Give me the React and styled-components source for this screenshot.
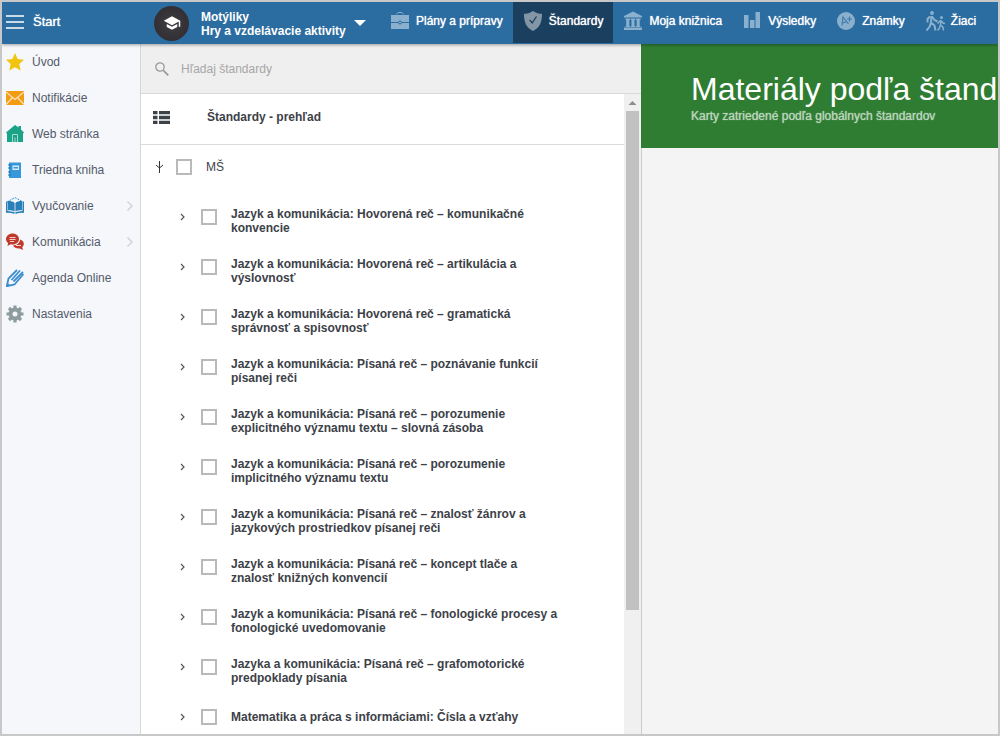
import React from 'react'
import { useState } from "react";
import styled, { createGlobalStyle } from "styled-components";

const menu = [
    { name: "Úvod", icon: "star" },
    { name: "Notifikácie", icon: "mail" },
    { name: "Web stránka", icon: "house" },
    { name: "Triedna kniha", icon: "notebook" },
    { name: "Vyučovanie", icon: "book", more: true },
    { name: "Komunikácia", icon: "chat", more: true },
    { name: "Agenda Online", icon: "pencil" },
    { name: "Nastavenia", icon: "gear" },
];

const tabs = [
    { name: "Plány a prípravy", icon: "briefcase" },
    { name: "Štandardy", icon: "shield" },
    { name: "Moja knižnica", icon: "library" },
    { name: "Výsledky", icon: "bars" },
    { name: "Známky", icon: "grade" },
    { name: "Žiaci", icon: "pupils" },
];

const standards = [
    "Jazyk a komunikácia: Hovorená reč – komunikačné konvencie",
    "Jazyk a komunikácia: Hovorená reč – artikulácia a výslovnosť",
    "Jazyk a komunikácia: Hovorená reč – gramatická správnosť a spisovnosť",
    "Jazyk a komunikácia: Písaná reč – poznávanie funkcií písanej reči",
    "Jazyk a komunikácia: Písaná reč – porozumenie explicitného významu textu – slovná zásoba",
    "Jazyk a komunikácia: Písaná reč – porozumenie implicitného významu textu",
    "Jazyk a komunikácia: Písaná reč – znalosť žánrov a jazykových prostriedkov písanej reči",
    "Jazyk a komunikácia: Písaná reč – koncept tlače a znalosť knižných konvencií",
    "Jazyk a komunikácia: Písaná reč – fonologické procesy a fonologické uvedomovanie",
    "Jazyka a komunikácia: Písaná reč – grafomotorické predpoklady písania",
    "Matematika a práca s informáciami: Čísla a vzťahy",
];

const menuIcons = {
    star: <path fill="#f1c40f" d="M9 0l2.700 6 6.300.7-4.700 4.300 1.400 6.600L9 14.200l-5.700 3.400 1.400-6.600L0 6.700 6.300 6z" />,
    mail: (
        <>
            <path fill="#f39c12" d="M0 2h18v14H0z" />
            <path fill="none" stroke="#fbe3bd" strokeWidth="1.200" d="M0 3l9 7.500L18 3M0 15.500l6.500-7M18 15.500l-6.500-7" />
        </>
    ),
    house: (
        <>
            <path fill="#1aa386" d="M9 0l3.500 2.600V1H15v3.600L18 7.500 17 8.700V17H1V8.700L0 7.500z" />
            <path fill="none" stroke="#a5dccf" d="M6.500 17V9.500h5V17M9 17v-4.500" />
        </>
    ),
    notebook: (
        <>
            <path fill="#3498db" d="M3 1.500h12v15.500H3z" />
            <path fill="#2472a8" d="M2 3.500h3v1H2zM2 6.500h3v1H2zM2 10.500h3v1H2zM2 13.500h3v1H2z" />
            <path fill="#d8ecfa" d="M6.500 4.500H13v4.500H6.500z" />
            <path fill="#3498db" d="M7.500 6h4.500v1.500H7.500z" />
        </>
    ),
    book: (
        <>
            <path fill="none" stroke="#3498db" strokeDasharray="2 1" d="M1 5l8-4.500L17 5" />
            <path fill="#2980b9" d="M0 4.500h1.500V14l7 1v2l-3-1-5.500-.2zM18 4.500h-1.500V14l-7 1v2l3-1 5.500-.2zM2 4c3 0 5.500.6 6.600 2v8.500C7 13.300 5 13.200 2 13.200zM16 4c-3 0-5.500.6-6.600 2v8.500c1.600-1.200 3.600-1.300 6.600-1.300z" />
        </>
    ),
    chat: (
        <>
            <path fill="#c0392b" d="M6.500.5C10.500.5 13 3 13 6s-2.500 5.500-6.500 5.500c-.6 0-1.200-.1-1.800-.2L1.500 13l.6-3C.8 9 0 7.600 0 6 0 3 2.800.5 6.500.5z" />
            <path fill="#c0392b" d="M14 6.500c2.300.6 3.800 2.200 3.800 4.200 0 1.500-.7 2.700-1.600 3.500l.9 2.800-3.400-1.500c-3 .3-5.700-.8-6.700-3C11 12.200 14 10 14 6.500z" />
            <path stroke="#f3d3cf" d="M3.500 4.500h6M3.500 6.500h6M4 8.500h4M10 12.500h5" />
        </>
    ),
    pencil: (
        <>
            <path fill="none" stroke="#3b8fd0" strokeWidth="1.800" d="M11 1L2.500 9.500.8 17.200 8.500 15.500 17.500 5" />
            <path stroke="#3b8fd0" strokeWidth="1.800" d="M14 1.500L5.500 11M17 3L7.500 12.500" />
            <path fill="#3b8fd0" d="M0 18l1.300-4.500 3.200 3.200z" />
        </>
    ),
    gear: (
        <>
            <circle cx="9" cy="9" r="4.500" fill="none" stroke="#8d9c9e" strokeWidth="4" />
            <path stroke="#8d9c9e" strokeWidth="3.200" d="M9 .5v3M9 14.500v3M.5 9h3M14.500 9h3M3 3l2 2M13 13l2 2M3 15l2-2M13 5l2-2" />
        </>
    ),
};

const tabIcons = {
    briefcase: (
        <>
            <path fill="none" stroke="currentColor" d="M7 3.500V2.500L8 1.500h4l1 1v1" />
            <path fill="currentColor" d="M1 4h18v14H1z" />
            <path stroke="#2b6da1" d="M1 11.500h18" />
            <circle cx="10" cy="11.500" r="1.500" fill="#8bb0cd" stroke="#2b6da1" />
        </>
    ),
    shield: (
        <>
            <path fill="currentColor" d="M10 0c3 2 6 2.800 9 2.800 0 8-2 14-9 17.200C3 16.800 1 10.800 1 2.800 4 2.800 7 2 10 0z" />
            <path fill="none" stroke="#1b405f" strokeWidth="1.300" d="M6.700 9l2.500 3 4.300-6.500" />
        </>
    ),
    library: <path fill="currentColor" d="M10 .5l9 4.500v1.500H1V5zM2.500 7.500h4.500v1.500H6.300v6H7V16H2.500v-1h.7V9h-.7zM7.800 7.500h4.500v1.500h-.8v6h.8V16H7.800v-1h.7V9h-.7zM13 7.500h4.500v1.500h-.8v6h.8V16H13v-1h.7V9H13zM1 16.500h18V19H1z" />,
    bars: <path fill="currentColor" d="M2 4h4.500v13H2zM8 9h4.500v8H8zM13.500 1H18v16h-4.500z" />,
    grade: (
        <>
            <circle cx="10" cy="10" r="9" fill="currentColor" />
            <path fill="none" stroke="#3f7baa" strokeWidth="1.200" d="M6 14.500L7 6l5.500 7M6.500 12l4.500-1.500M11 8h5M13.500 5.500v5" />
        </>
    ),
    pupils: (
        <>
            <circle cx="7" cy="2" r="1.900" fill="currentColor" />
            <path fill="none" stroke="currentColor" strokeWidth="2" d="M6.500 5L6 11.500l3.500 3 1 5M6 11.500L4.700 15.500 1.500 19.500M7 5.500l2.500 3.500 3 1.500M5 5.500L2.500 8v3.500" />
            <circle cx="16.500" cy="6.500" r="1.500" fill="currentColor" />
            <path fill="none" stroke="currentColor" strokeWidth="1.500" d="M16 9l-.5 5 2.300 2 .7 3.500M15.500 14l-1 3-1.800 2.500M16 9.500l2 2.500 2 .5M15.500 9.500l-2 2-1 1" />
        </>
    ),
};

function App() {
    const [activeTab, setActiveTab] = useState("Štandardy");

    return (
        <Page>
            <GlobalStyle />
            <Header>
                <StartButton>
                    <svg width="18" height="14" viewBox="0 0 18 14"><path stroke="#fff" strokeWidth="1.500" d="M0 1h18M0 7h18M0 13h18" /></svg>
                    <span>Štart</span>
                </StartButton>
                <ClassButton>
                    <Avatar>
                        <svg width="18" height="18" viewBox="0 0 24 24" fill="#fff"><path d="M5 13.180v4L12 21l7-3.820v-4L12 17l-7-3.820zM12 3L1 9l11 6 9-4.910V17h2V9L12 3z" /></svg>
                    </Avatar>
                    <ClassName>Motýliky<br />Hry a vzdelávacie aktivity</ClassName>
                    <svg width="12" height="6" viewBox="0 0 12 6"><path fill="#fff" d="M0 0h12L6 6z" /></svg>
                </ClassButton>
                <Nav>
                    {tabs.map((tab) => (
                        <Tab key={tab.name} $active={tab.name === activeTab} onClick={() => setActiveTab(tab.name)}>
                            <svg width="20" height="20" viewBox="0 0 20 20">{tabIcons[tab.icon]}</svg>
                            <span>{tab.name}</span>
                        </Tab>
                    ))}
                </Nav>
            </Header>
            <Body>
                <Sidebar>
                    {menu.map((item) => (
                        <MenuLink key={item.name} href="#">
                            <svg width="18" height="18" viewBox="0 0 18 18">{menuIcons[item.icon]}</svg>
                            <span>{item.name}</span>
                            {item.more && <More width="6" height="10" viewBox="0 0 6 10"><path fill="none" stroke="currentColor" strokeWidth="1.300" d="M.5.5L5 5 .5 9.500" /></More>}
                        </MenuLink>
                    ))}
                </Sidebar>
                <Panel>
                    <Search>
                        <svg width="14" height="14" viewBox="0 0 14 14" fill="none" stroke="#999"><circle cx="5" cy="5" r="4.200" strokeWidth="1.300" /><path strokeWidth="1.700" d="M8.300 8.300l5 5" /></svg>
                        <input type="search" placeholder="Hľadaj štandardy" aria-label="Hľadaj štandardy" />
                    </Search>
                    <ScrollArea>
                        <Tree>
                            <Overview>
                                <svg width="17" height="13" viewBox="0 0 17 13" fill="#3d4148"><path d="M0 0h4.500v3.300H0zM6 0h11v3.300H6zM0 4.800h4.500v3.400H0zM6 4.800h11v3.400H6zM0 9.700h4.500V13H0zM6 9.700h11V13H6z" /></svg>
                                <span>Štandardy - prehľad</span>
                            </Overview>
                            <Level>
                                <Toggle aria-label="Zbaliť">
                                    <svg width="8" height="12" viewBox="0 0 8 12" fill="none" stroke="#333"><path d="M4.500 0v12M1 4l3.500 3L8 4" /></svg>
                                </Toggle>
                                <Label><input type="checkbox" /><span>MŠ</span></Label>
                            </Level>
                            <Items>
                                {standards.map((name) => (
                                    <Item key={name}>
                                        <Toggle aria-label="Rozbaliť">
                                            <svg width="8" height="8" viewBox="0 0 8 8" fill="none" stroke="#555" strokeWidth="1.200"><path d="M2 1l3 3-3 3" /></svg>
                                        </Toggle>
                                        <Label $bold $wraps={name.length > 50}><input type="checkbox" /><span>{name}</span></Label>
                                    </Item>
                                ))}
                            </Items>
                        </Tree>
                        <Scrollbar>
                            <svg width="13" height="17" viewBox="0 0 13 17"><path fill="#8c8c8c" d="M6.500 7l4 4h-8z" /></svg>
                            <Thumb />
                        </Scrollbar>
                    </ScrollArea>
                </Panel>
                <Content>
                    <Banner>
                        <h1>Materiály podľa štand</h1>
                        <p>Karty zatriedené podľa globálnych štandardov</p>
                    </Banner>
                    <Cards />
                </Content>
            </Body>
        </Page>
    )
}

const GlobalStyle = createGlobalStyle`
    * {
        box-sizing: border-box;
    }
    body {
        margin: 0;
    }
    body, button, input {
        font-family: "Liberation Sans", Arial, sans-serif;
        font-size: 12px;
    }
    button {
        padding: 0;
        border: 0;
        background: none;
        color: inherit;
        cursor: pointer;
    }
    svg {
        flex: none;
    }
`

const Page = styled.div`
    display: flex;
    flex-direction: column;
    height: 100vh;
    border: 2px solid #c8c8c8;
    background: #f4f4f4;
    overflow: hidden;
`

const Header = styled.header`
    display: flex;
    flex: none;
    height: 42px;
    background: #2b6da1;
    color: white;
    box-shadow: 0 1px 3px rgba(0, 0, 0, 0.35);
    z-index: 1;
`

const StartButton = styled.button`
    display: flex;
    align-items: center;
    gap: 9px;
    width: 152px;
    padding: 0 0 3px 4px;
    font-size: 13px;
    text-shadow: 0 0 1px white;
`

const ClassButton = styled.button`
    display: flex;
    align-items: center;
    width: 226px;
    text-align: left;
`

const Avatar = styled.span`
    display: flex;
    align-items: center;
    justify-content: center;
    width: 35px;
    height: 35px;
    margin-right: 12px;
    border-radius: 50%;
    background: radial-gradient(#403d42, #2c2a2f);
`

const ClassName = styled.span`
    margin-right: 8px;
    padding-top: 2px;
    font-weight: bold;
    line-height: 14px;
    white-space: nowrap;
`

const Nav = styled.nav`
    display: flex;
    height: 41px;
`

const Tab = styled.button`
    display: flex;
    align-items: center;
    gap: 6px;
    padding: 0 10px 3px;
    background: ${(props) => (props.$active ? "#1b405f" : "transparent")};
    text-shadow: 0 0 1px white;
    white-space: nowrap;

    svg {
        color: ${(props) => (props.$active ? "#8396a6" : "#8bb0cd")};
    }
`

const Body = styled.div`
    display: flex;
    flex: 1;
    min-height: 0;
`

const Sidebar = styled.nav`
    flex: none;
    width: 139px;
    border-right: 1px solid #d5d6d8;
    background: #f5f7fa;
`

const MenuLink = styled.a`
    display: flex;
    align-items: center;
    gap: 8px;
    height: 36px;
    padding: 0 7px 0 4px;
    color: #545a6b;
    text-decoration: none;
`

const More = styled.svg`
    margin-left: auto;
    color: #ccd0d4;
`

const Panel = styled.section`
    display: flex;
    flex-direction: column;
    flex: none;
    width: 500px;
    background: white;
`

const Search = styled.label`
    display: flex;
    align-items: center;
    flex: none;
    gap: 12px;
    height: 50px;
    padding: 0 14px;
    border-bottom: 1px solid #d9d9d9;
    background: #efefef;

    input {
        flex: 1;
        padding: 0;
        border: 0;
        outline: 0;
        background: none;
    }
    input::placeholder {
        color: #a6a6a6;
    }
`

const ScrollArea = styled.div`
    display: flex;
    flex: 1;
    min-height: 0;
`

const Tree = styled.div`
    flex: 1;
    overflow: hidden;
    color: #3d4148;
`

const Overview = styled.div`
    display: flex;
    align-items: center;
    gap: 37px;
    height: 51px;
    padding: 0 12px 4px;
    border-bottom: 1px solid #dcdcdc;
    font-weight: bold;
`

const Level = styled.div`
    display: flex;
    align-items: center;
    height: 44px;
    padding-left: 10px;
`

const Items = styled.ul`
    margin: 0;
    padding: 3px 0 0 34px;
    list-style: none;
`

const Item = styled.li`
    display: flex;
    align-items: center;
    height: 50px;
`

const Toggle = styled.button`
    display: flex;
    align-items: center;
    justify-content: center;
    width: 16px;
    height: 16px;
    margin-right: 9px;

    li & {
        margin-right: 10px;
    }
`

const Label = styled.label`
    display: flex;
    align-items: center;
    gap: 14px;
    max-width: 360px;
    font-weight: ${(props) => (props.$bold ? "bold" : "normal")};
    line-height: 14px;

    input {
        appearance: none;
        flex: none;
        width: 16px;
        height: 16px;
        margin: 0;
        border: 2px solid #b9b9b9;
        background: white;
    }
    input:checked {
        background: #2b6da1;
    }
    span {
        padding-top: ${(props) => (props.$wraps ? "8px" : "0")};
    }
`

const Scrollbar = styled.div`
    display: flex;
    flex-direction: column;
    align-items: center;
    width: 17px;
    background: #f0f0f0;
`

const Thumb = styled.div`
    width: 13px;
    height: 78%;
    background: #c1c1c1;
`

const Content = styled.main`
    display: flex;
    flex-direction: column;
    flex: 1;
    min-width: 0;
`

const Banner = styled.div`
    display: flex;
    flex-direction: column;
    justify-content: center;
    height: 104px;
    padding: 4px 0 0 50px;
    background: #2f7d32;
    white-space: nowrap;

    h1 {
        margin: 0;
        color: white;
        font-size: 32px;
        font-weight: normal;
        line-height: 36px;
    }
    p {
        margin: 0;
        color: #b9d5ba;
        line-height: 18px;
        text-shadow: 0 0 1px #b9d5ba;
    }
`

const Cards = styled.div`
    flex: 1;
    border-left: 1px solid #cccccc;
`

export default App
